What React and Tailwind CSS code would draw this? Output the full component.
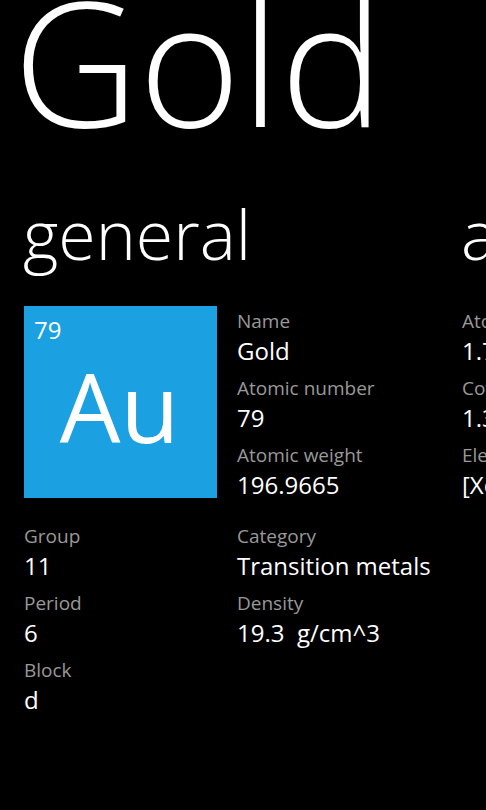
import React from "react";

const font = { fontFamily: '"Open Sans", "Noto Sans", sans-serif' };

function Field({ label, value }) {
  return (
    <div className="mb-[7px]">
      <div className="text-[19px] leading-[30px] text-[#999999] whitespace-nowrap">{label}</div>
      <div className="text-[24px] leading-[30px] text-white whitespace-nowrap">{value}</div>
    </div>
  );
}

export default function App() {
  const general = [
    { label: "Name", value: "Gold" },
    { label: "Atomic number", value: "79" },
    { label: "Atomic weight", value: "196.9665" },
  ];

  const atomic = [
    { label: "Atomic radius", value: "1.79 Å" },
    { label: "Covalent radius", value: "1.36 Å" },
    { label: "Electron configuration", value: "[Xe] 4f14 5d10 6s1" },
  ];

  return (
    <div className="w-[486px] h-[810px] bg-black overflow-hidden text-white" style={font}>
      {/* Panorama title */}
      <h1 className="pl-[13px] text-[174px] leading-[119px] font-light whitespace-nowrap">Gold</h1>

      <div className="flex mt-[75px]">
        {/* general pane */}
        <section className="w-[462px] shrink-0 pl-[24px]">
          <h2 className="text-[68px] leading-[80px] font-light -ml-[1px]">general</h2>

          <div className="flex gap-[20px] mt-[32px]">
            <div className="w-[193px] h-[192px] bg-[#1ba1e2] flex flex-col pt-[12px] pl-[10px] shrink-0">
              <div className="text-[24px] leading-[24px]">79</div>
              <div className="text-[96px] leading-[96px] mt-[16px] text-center pr-[12px]">Au</div>
            </div>
            <div className="pt-[0px]">
              {general.map((f) => (
                <Field key={f.label} {...f} />
              ))}
            </div>
          </div>

          <div className="flex gap-[20px] mt-[14px]">
            <div className="w-[193px] shrink-0">
              <Field label="Group" value="11" />
              <Field label="Period" value="6" />
              <Field label="Block" value="d" />
            </div>
            <div>
              <Field label="Category" value="Transition metals" />
              <Field label="Density" value={"19.3\u00a0\u00a0g/cm^3"} />
            </div>
          </div>
        </section>

        {/* atomic pane (peeking in from the right) */}
        <section className="w-[438px] shrink-0">
          <h2 className="text-[68px] leading-[80px] font-light -ml-[1px]">atomic</h2>
          <div className="mt-[32px]">
            {atomic.map((f) => (
              <Field key={f.label} {...f} />
            ))}
          </div>
        </section>
      </div>
    </div>
  );
}
